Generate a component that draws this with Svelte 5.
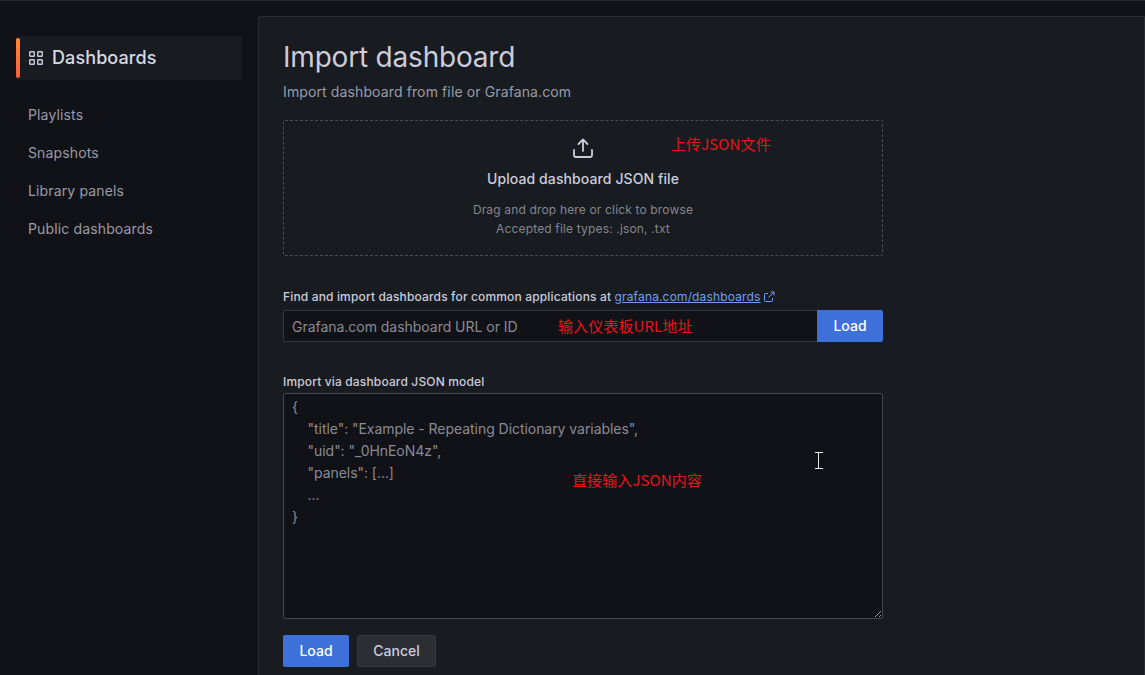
<script>
  const nav = ['Playlists', 'Snapshots', 'Library panels', 'Public dashboards'];
  const placeholder = `{
    "title": "Example - Repeating Dictionary variables",
    "uid": "_0HnEoN4z",
    "panels": [...]
    ...
}`;
</script>

<div class="page">
  <aside class="side">
    <div class="active">
      <svg class="gicon" viewBox="0 0 14 14" width="14" height="14" aria-hidden="true">
        <rect x="0.75" y="0.75" width="4.500" height="4.500" rx="0.5" />
        <rect x="8.750" y="0.75" width="4.500" height="4.500" rx="0.5" />
        <rect x="0.75" y="8.750" width="4.500" height="4.500" rx="0.5" />
        <rect x="8.750" y="8.750" width="4.500" height="4.500" rx="0.5" />
      </svg>
      <span>Dashboards</span>
    </div>
    <nav class="nav">
      {#each nav as item}
        <div class="item">{item}</div>
      {/each}
    </nav>
  </aside>

  <main class="panel">
    <h1>Import dashboard</h1>
    <p class="sub">Import dashboard from file or Grafana.com</p>

    <div class="drop">
      <svg class="upicon" viewBox="0 0 24 24" width="24" height="24" fill="none" aria-hidden="true">
        <path d="M3 14v5a2 2 0 0 0 2 2h14a2 2 0 0 0 2-2v-5M12 15V3.500M7.500 8 12 3.500 16.500 8" />
      </svg>
      <div class="uptitle">Upload dashboard JSON file</div>
      <div class="uphint">Drag and drop here or click to browse</div>
      <div class="uphint">Accepted file types: .json, .txt</div>
    </div>

    <label class="lab first" for="gid">
      Find and import dashboards for common applications at
      <a href="#top">grafana.com/dashboards</a>
      <svg class="ext" viewBox="0 0 12 12" width="12" height="12" fill="none" aria-hidden="true">
        <path d="M9.500 7v2.500a1 1 0 0 1-1 1h-6a1 1 0 0 1-1-1v-6a1 1 0 0 1 1-1H5M7.500 1h3.500v3.500M11 1 5.500 6.500" />
      </svg>
    </label>
    <div class="row">
      <input id="gid" placeholder="Grafana.com dashboard URL or ID" />
      <button class="btn primary">Load</button>
    </div>

    <label class="lab second" for="model">Import via dashboard JSON model</label>
    <textarea id="model" {placeholder}></textarea>

    <div class="actions">
      <button class="btn primary">Load</button>
      <button class="btn secondary">Cancel</button>
    </div>
  </main>

  <span class="note n1">上传JSON文件</span>
  <span class="note n2">输入仪表板URL地址</span>
  <span class="note n3">直接输入JSON内容</span>

  <svg class="cursor" viewBox="0 0 8 17" width="8" height="17" aria-hidden="true">
    <path d="M0 .5h3M5 .5h3M3.500 1v15M0 16.500h3M5 16.500h3M3 .5h2M3 16.500h2" />
  </svg>
</div>

<style>
  :global(body) {
    margin: 0;
    background: #111217;
    overflow: hidden;
  }
  .page {
    position: relative;
    width: 1145px;
    height: 675px;
    box-sizing: border-box;
    border-top: 1px solid #26282c;
    display: flex;
    overflow: hidden;
    background: #111217;
    font-family: Inter, "Noto Sans CJK SC", sans-serif;
    font-size: 14px;
    color: #ccccdc;
  }
  .side {
    width: 258px;
    flex: none;
    box-sizing: border-box;
    padding: 35px 16px 0;
  }
  .active {
    position: relative;
    width: 226px;
    height: 44px;
    display: flex;
    align-items: center;
    gap: 9px;
    padding: 0 0 2px 13px;
    box-sizing: border-box;
    background: #181b1f;
    border-radius: 2px;
    font-size: 18px;
    font-weight: 500;
    letter-spacing: 0.1px;
    color: #d8d9e6;
  }
  .active::before {
    content: "";
    position: absolute;
    left: 0;
    top: 2px;
    bottom: 2px;
    width: 4px;
    border-radius: 2px;
    background: linear-gradient(0deg, #f55f3e, #ff8833);
  }
  .gicon {
    fill: none;
    stroke: #ccccdc;
    stroke-width: 1.400;
    margin-top: 1px;
  }
  .nav {
    margin-top: 16px;
    display: flex;
    flex-direction: column;
  }
  .item {
    height: 38px;
    line-height: 38px;
    padding-left: 12px;
    color: #9a9ba8;
    letter-spacing: 0.01em;
  }
  .panel {
    flex: none;
    width: 887px;
    margin-top: 15px;
    box-sizing: border-box;
    height: 700px;
    padding: 0 24px;
    background: #181b1f;
    border: 1px solid #2a2c31;
    border-radius: 2px 0 0 0;
  }
  h1 {
    margin: 22px 0 0;
    font-size: 28px;
    line-height: 36px;
    font-weight: 400;
    letter-spacing: -0.2px;
    color: #ccccdc;
  }
  .sub {
    margin: 6px 0 0;
    line-height: 22px;
    letter-spacing: 0.12px;
    color: #9a9ba8;
  }
  .drop {
    margin-top: 17px;
    width: 600px;
    height: 136px;
    box-sizing: border-box;
    border: 1px dashed #4a4c52;
    border-radius: 2px;
    padding-top: 15px;
    display: flex;
    flex-direction: column;
    align-items: center;
  }
  .upicon {
    display: block;
  }
  .upicon path {
    stroke: #ccccdc;
    stroke-width: 1.800;
    stroke-linecap: round;
    stroke-linejoin: round;
  }
  .uptitle {
    margin-top: 8px;
    margin-bottom: 10px;
    line-height: 22px;
    font-weight: 500;
    letter-spacing: 0.1px;
    color: #ccccdc;
  }
  .uphint {
    font-size: 12px;
    line-height: 19px;
    letter-spacing: 0.16px;
    color: #85868f;
  }
  .lab {
    display: block;
    font-size: 12px;
    font-weight: 500;
    line-height: 16px;
    letter-spacing: 0.15px;
    color: #ccccdc;
  }
  .lab.first {
    margin-top: 33px;
    margin-bottom: 5px;
  }
  .lab.second {
    margin-top: 32px;
    margin-bottom: 3px;
  }
  .lab a {
    color: #6e9fff;
    font-weight: 400;
    text-decoration: underline;
  }
  .ext {
    vertical-align: -2px;
    margin-left: -1px;
  }
  .ext path {
    stroke: #6e9fff;
    stroke-width: 1;
  }
  .row {
    display: flex;
    width: 600px;
    height: 32px;
  }
  input {
    flex: 1;
    min-width: 0;
    box-sizing: border-box;
    padding: 0 8px;
    background: #111217;
    border: 1px solid #35373c;
    border-right: 0;
    border-radius: 2px 0 0 2px;
    font: inherit;
    letter-spacing: -0.03px;
    color: #ccccdc;
    outline: none;
  }
  input::placeholder,
  textarea::placeholder {
    color: #8a8b95;
    opacity: 1;
  }
  .row .btn {
    border-radius: 0 2px 2px 0;
  }
  textarea {
    display: block;
    width: 600px;
    height: 226px;
    box-sizing: border-box;
    padding: 2px 8px;
    background: #111217;
    border: 1px solid #46484d;
    border-radius: 2px;
    font: inherit;
    line-height: 22px;
    letter-spacing: -0.05px;
    outline: none;
    color: #ccccdc;
    white-space: pre-wrap;
  }
  .actions {
    display: flex;
    gap: 8px;
    margin-top: 16px;
  }
  .btn {
    height: 32px;
    box-sizing: border-box;
    padding: 0 16px;
    border: 0;
    border-radius: 2px;
    font: inherit;
    font-weight: 500;
    line-height: 32px;
  }
  .primary {
    width: 66px;
    padding: 0;
    background: #3d71d9;
    color: #fff;
  }
  .secondary {
    width: 79px;
    padding: 0;
    background: #2d2e34;
    border: 1px solid #37383d;
    color: #ccccdc;
    line-height: 30px;
  }
  .note {
    position: absolute;
    font-family: "Noto Sans CJK SC", sans-serif;
    font-size: 15px;
    line-height: 20px;
    letter-spacing: 0.1px;
    color: #e8141c;
    white-space: nowrap;
  }
  .n1 { left: 671px; top: 133px; }
  .n2 { left: 558px; top: 315px; }
  .n3 { left: 572px; top: 469px; }
  .cursor {
    position: absolute;
    left: 815px;
    top: 451px;
    fill: none;
    stroke: #e8e8e8;
    stroke-width: 1;
  }
</style>
